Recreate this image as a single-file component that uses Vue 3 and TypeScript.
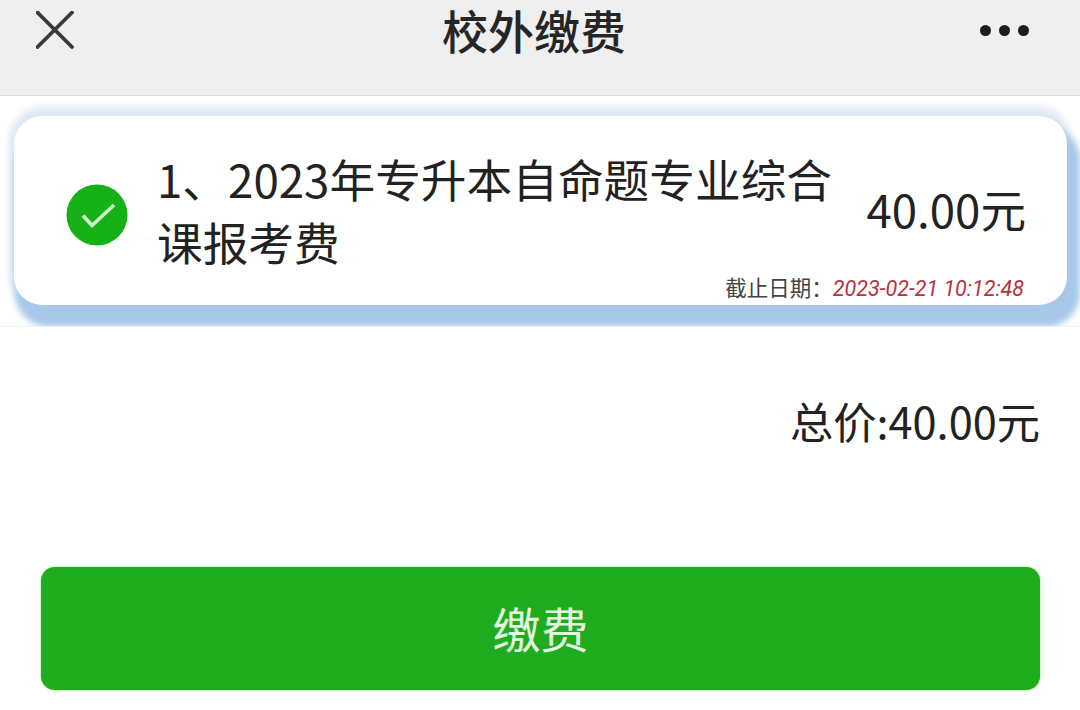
<script setup lang="ts">
const item = {
  title: '1、2023年专升本自命题专业综合课报考费',
  price: '40.00元',
  deadline: '2023-02-21 10:12:48',
}
</script>

<template>
  <div class="page">
    <header class="nav">
      <svg class="close" viewBox="0 0 38 38" width="38" height="38" aria-hidden="true">
        <path d="M1.500 1.500 L36 36 M36 1.500 L1.500 36" stroke="#3a3a3a" stroke-width="3.800" stroke-linecap="round" fill="none" />
      </svg>
      <h1 class="nav-title">校外缴费</h1>
      <div class="more" aria-hidden="true"><i></i><i></i><i></i></div>
    </header>

    <section class="list">
      <div class="card">
        <svg class="check" viewBox="0 0 62 62" width="62" height="62" aria-hidden="true">
          <circle cx="31" cy="31" r="30.5" fill="#16b116" />
          <path d="M17 31.500 L26 41.500 L48 21" stroke="#d3f6cf" stroke-width="3.600" fill="none" />
        </svg>
        <div class="item-title">{{ item.title }}</div>
        <div class="item-price">{{ item.price }}</div>
        <div class="deadline">截止日期：<em>{{ item.deadline }}</em></div>
      </div>
    </section>

    <div class="total">总价:40.00元</div>

    <button class="pay" type="button">缴费</button>
  </div>
</template>

<style>
html, body { margin: 0; background: #fff; overflow: hidden; }
</style>

<style scoped>
.page {
  width: 1080px;
  height: 710px;
  background: #fff;
  font-family: "Noto Sans CJK SC", "Noto Sans", sans-serif;
  color: #1a1a1a;
  display: flex;
  flex-direction: column;
  overflow: hidden;
}
.nav {
  position: relative;
  flex: none;
  box-sizing: border-box;
  background: #efefef;
  border-bottom: 1px solid #dcdcdc;
  height: 96px;
  display: flex;
  justify-content: space-between;
  padding: 11px 51px 0 36px;
}
.close { flex: none; }
.nav-title {
  position: absolute;
  left: 0;
  right: 12px;
  top: 0;
  margin: 0;
  text-align: center;
  font-size: 46px;
  line-height: 58px;
  font-weight: 500;
  color: #262626;
}
.more {
  display: flex;
  gap: 8px;
  padding-top: 14px;
}
.more i {
  display: block;
  width: 11px;
  height: 11px;
  border-radius: 50%;
  background: #1c1c1c;
}
.list {
  height: 231px;
  flex: none;
  box-sizing: border-box;
  padding: 20px 13px 0 14px;
  border-bottom: 1px solid #f1f1f1;
  overflow: hidden;
}
.card {
  position: relative;
  height: 189px;
  box-sizing: border-box;
  background: #fff;
  border-radius: 28px;
  box-shadow: 7px 16px 6px 6px #a7c8e8, 0 -7px 8px 2px #dde7f5, -5px 0 7px 0 #e6eefa;
  display: flex;
  align-items: flex-start;
  padding: 35px 41px 0 52px;
}
.check {
  flex: none;
  margin-top: 33px;
}
.item-title {
  width: 690px;
  margin-left: 29px;
  font-size: 45.7px;
  line-height: 63px;
  color: #222;
  flex: none;
  margin-top: -4px;
}
.item-price {
  margin-left: auto;
  font-size: 45.6px;
  line-height: 63px;
  margin-top: 26px;
  color: #222;
  white-space: nowrap;
}
.deadline {
  position: absolute;
  right: 43px;
  bottom: 1px;
  font-size: 21.5px;
  line-height: 30px;
  color: #444;
  white-space: nowrap;
}
.deadline em {
  font-family: Roboto, "Liberation Sans", sans-serif;
  font-style: italic;
  font-size: 21.5px;
  color: #b5333f;
}
.total {
  margin: 61px 40px 0 0;
  text-align: right;
  font-size: 43.3px;
  line-height: 64px;
  color: #222;
}
.pay {
  display: block;
  width: 999px;
  height: 123px;
  margin: 115px 0 0 41px;
  padding: 0 0 3px;
  border: 0;
  border-radius: 14px;
  background: #1fac1f;
  box-shadow: 0 0 2px #6fdc6f;
  color: #e3f6e0;
  font-family: inherit;
  font-size: 48px;
  line-height: 120px;
}
</style>
